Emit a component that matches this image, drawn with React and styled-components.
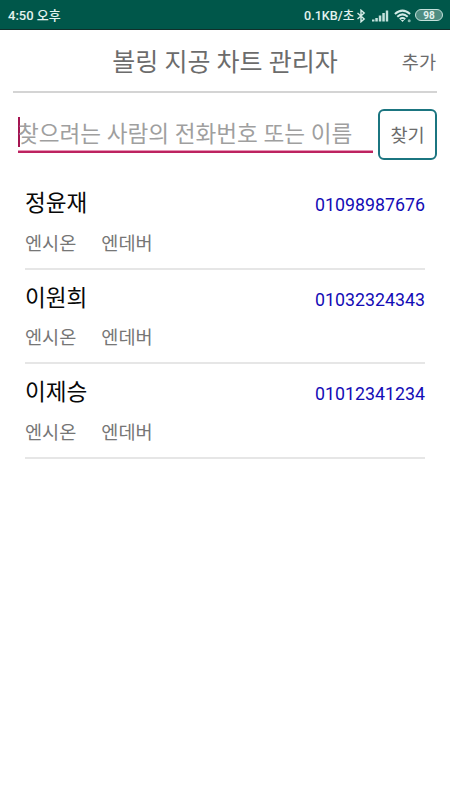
import React from "react";
import styled, { createGlobalStyle } from "styled-components";

const GlobalStyle = createGlobalStyle`
  * { box-sizing: border-box; }
  body {
    margin: 0;
    background: #fff;
    font-family: Roboto, "Noto Sans CJK KR", sans-serif;
  }
`;

const Screen = styled.div`
  display: flex;
  flex-direction: column;
  width: 450px;
  height: 800px;
  overflow: hidden;
  background: #fff;
`;

const StatusBar = styled.header`
  display: flex;
  justify-content: space-between;
  align-items: center;
  flex: none;
  height: 30px;
  padding: 2px 7px 0 8px;
  background: #00574a;
  border-bottom: 1px solid #10302b;
  color: #e3f3ef;
  font-size: 13px;
  font-weight: 500;
  line-height: 20px;
  white-space: nowrap;
`;

const StatusIcons = styled.div`
  display: flex;
  align-items: center;

  svg { display: block; flex: none; }
`;

const NetSpeed = styled.span`
  font-size: 12.6px;
  width: 52px;
`;

const Battery = styled.span`
  width: 28px;
  height: 12px;
  margin: -1px 0 0 3px;
  border: 1.4px solid #c3e0da;
  border-radius: 6px;
  background: #4f8d82;
  font-size: 10px;
  font-weight: 700;
  line-height: 11px;
  text-align: center;
`;

const TitleBar = styled.div`
  display: grid;
  grid-template-columns: 1fr auto 1fr;
  align-items: center;
  flex: none;
  height: 63px;
  margin: 0 13px;
  padding-top: 5px;
  border-bottom: 2px solid #d4d4d4;
`;

const Title = styled.h1`
  grid-column: 2;
  margin: 0;
  color: #6c6c6c;
  font-size: 25px;
  font-weight: 400;
  line-height: 36px;
  white-space: nowrap;
`;

const AddButton = styled.button`
  justify-self: end;
  margin-right: 1px;
  padding: 0;
  border: 0;
  background: none;
  color: #6c6c6c;
  font: 400 18.6px/28px Roboto, "Noto Sans CJK KR", sans-serif;
`;

const SearchRow = styled.form`
  display: flex;
  align-items: flex-start;
  flex: none;
  height: 67px;
  margin: 16px 13px 0 18px;
`;

const SearchField = styled.div`
  display: flex;
  width: 355px;
  height: 44px;
  margin-right: 5px;
  padding-top: 8px;
  border-bottom: 2px solid #bd2360;
  box-shadow: inset 0 -1px #e796b6;
`;

const Caret = styled.span`
  flex: none;
  width: 2px;
  height: 30px;
  margin-right: -2px;
  background: #a51551;
`;

const Hint = styled.span`
  padding-top: 3px;
  color: #9f9f9f;
  font-size: 22.6px;
  line-height: 30px;
  white-space: nowrap;
`;

const SearchButton = styled.button`
  width: 59px;
  height: 51px;
  padding: 2px 0 0;
  border: 2px solid #1b7580;
  border-radius: 6px;
  background: #fff;
  color: #6c6c6c;
  font: 400 18.6px/28px Roboto, "Noto Sans CJK KR", sans-serif;
`;

const PersonList = styled.ul`
  margin: 0;
  padding: 0 25px;
  list-style: none;
`;

const Person = styled.li`
  height: 94.6px;
  padding-top: 9px;

  &::after {
    content: "";
    display: block;
    height: 2px;
    margin-top: 10px;
    background: #e6e6e6;
  }
`;

const PersonHead = styled.div`
  display: flex;
  justify-content: space-between;
  align-items: center;
  height: 36px;
`;

const Name = styled.span`
  padding-top: 2px;
  color: #080808;
  font-size: 22.6px;
  line-height: 34px;
`;

const Phone = styled.a`
  padding-top: 4px;
  color: #140cb6;
  font-size: 17.8px;
  line-height: 24px;
`;

const Centers = styled.div`
  display: flex;
  gap: 25px;
  margin-top: 8.6px;
  color: #767676;
  font-size: 18.6px;
  line-height: 28px;
`;

const BluetoothIcon = () => (
  <svg width="11" height="14" viewBox="0 0 11 14" fill="none" stroke="#d3ebe6" strokeWidth="1.4">
    <path d="M1.5 4 L8.2 10 L5 12.8 V1.2 L8.2 4 L1.5 10" />
  </svg>
);

const SignalIcon = () => (
  <svg width="17" height="12" viewBox="0 0 17 12" fill="#c3e2dc">
    <path d="M0 9.5h2.5v2H0zM3.3 8h2.5v3.5H3.3zM6.8 5.5h2.5v6H6.8zM10.3 3h2.5v8.5h-2.5zM13.8 .5h2.4v11h-2.4z" />
  </svg>
);

const WifiIcon = () => (
  <svg width="18" height="14" viewBox="0 0 18 14" fill="none" stroke="#d3ebe6" strokeWidth="2">
    <path d="M.9 5.1 Q8.5 -1.8 16.1 5.1" />
    <path d="M3.3 7.8 Q8.5 3 13.7 7.8" />
    <path d="M5.8 10.2 Q8.5 7.8 11.2 10.2" />
    <path d="M6.8 11 L8.5 13 L10.2 11Z" fill="#d3ebe6" stroke="none" />
    <circle cx="15.2" cy="11.8" r="1.5" fill="#84b9ae" stroke="none" />
  </svg>
);

const StatusGap = styled.span`
  width: ${({ $size }) => $size}px;
`;

const people = [
  { name: "정윤재", phone: "01098987676" },
  { name: "이원희", phone: "01032324343" },
  { name: "이제승", phone: "01012341234" },
];

export default function App() {
  return (
    <>
      <GlobalStyle />
      <Screen>
        <StatusBar>
          <span>4:50 오후</span>
          <StatusIcons>
            <NetSpeed>0.1KB/초</NetSpeed>
            <BluetoothIcon />
            <StatusGap $size={5} />
            <SignalIcon />
            <StatusGap $size={5} />
            <WifiIcon />
            <Battery>98</Battery>
          </StatusIcons>
        </StatusBar>
        <TitleBar>
          <Title>볼링 지공 차트 관리자</Title>
          <AddButton>추가</AddButton>
        </TitleBar>
        <SearchRow>
          <SearchField>
            <Caret />
            <Hint>찾으려는 사람의 전화번호 또는 이름</Hint>
          </SearchField>
          <SearchButton type="button">찾기</SearchButton>
        </SearchRow>
        <PersonList>
          {people.map((person) => (
            <Person key={person.phone}>
              <PersonHead>
                <Name>{person.name}</Name>
                <Phone>{person.phone}</Phone>
              </PersonHead>
              <Centers>
                <span>엔시온</span>
                <span>엔데버</span>
              </Centers>
            </Person>
          ))}
        </PersonList>
      </Screen>
    </>
  );
}
